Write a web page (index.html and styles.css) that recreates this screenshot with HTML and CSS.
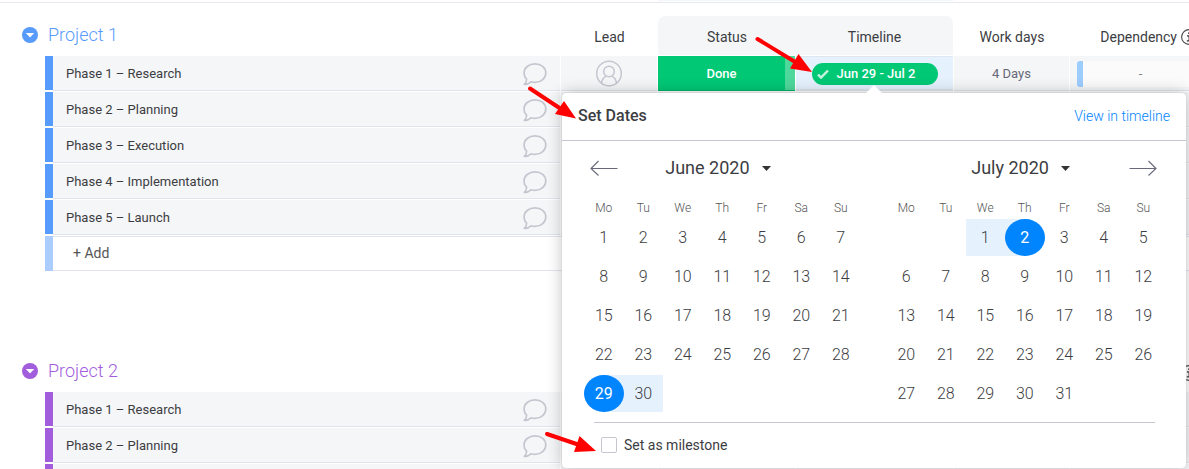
FILE: index.html
```html
<!DOCTYPE html>
<html lang="en">
<head>
<meta charset="utf-8">
<title>Project board</title>
<link rel="stylesheet" href="styles.css">
</head>
<body>
<svg class="symbols" aria-hidden="true">
  <symbol id="chat" viewBox="0 0 26 24"><path d="M14 1.800C7.800 1.800 3 5.900 3 11c0 2.400 1 4.500 2.600 6.100.2 1.800-.6 3.600-2.400 5.200 3 0 5.200-.9 6.800-2.500 1.200.4 2.600.6 4 .6 6.200 0 10.800-4.200 10.800-9.400S20.200 1.800 14 1.800z" fill="none" stroke="#c5c7d0" stroke-width="1.700" stroke-linejoin="round"/></symbol>
  <symbol id="toggle" viewBox="0 0 16 16"><circle cx="8" cy="8" r="8" fill="currentColor"/><path d="M3.800 6h8.400L8 10.600z" fill="#fff"/></symbol>
  <symbol id="info" viewBox="0 0 16 16"><circle cx="8" cy="8" r="7.400" fill="none" stroke="#444" stroke-width="1.100"/><path d="M6 6.900h2.200v5M5.800 11.900h5M7 4.200h1.600" fill="none" stroke="#333" stroke-width="1.300"/></symbol>
</svg>
<div class="topline"><span class="topline-cell"></span></div>
<main class="board">
  <table class="group blue">
    <colgroup><col class="c-gutter"><col class="c-bar"><col><col class="c-lead"><col class="c-status"><col class="c-timeline"><col class="c-days"><col class="c-dep"></colgroup>
    <thead>
      <tr>
        <th colspan="3" scope="col"><div class="group-title"><button class="toggle" aria-label="Collapse group"><svg><use href="#toggle"/></svg></button><span>Project 1</span></div></th>
        <th scope="col">Lead</th>
        <th scope="col" class="shade shade-first">Status</th>
        <th scope="col" class="shade shade-last">Timeline</th>
        <th scope="col">Work days</th>
        <th scope="col"><div class="dep-title">Dependency <svg><use href="#info"/></svg></div></th>
      </tr>
    </thead>
    <tbody>
      <tr>
        <td class="gutter"></td><td class="bar"></td>
        <td><div class="name">Phase 1 – Research<button class="chat" aria-label="Comments"><svg><use href="#chat"/></svg></button></div></td>
        <td class="center"><svg class="person" viewBox="0 0 28 28"><g fill="none" stroke="#c5c7d0" stroke-width="1.500"><circle cx="14" cy="13.500" r="12.300"/><circle cx="14" cy="11.500" r="5.300"/><path d="M6.500 23c.5-3.500 2-5.500 4.300-6.700M21.500 23c-.5-3.500-2-5.500-4.300-6.700"/></g></svg></td>
        <td class="status">Done</td>
        <td class="timeline">
          <button class="pill"><svg viewBox="0 0 12 10"><path d="M1 5.500 4 8.600 11 1.500" fill="none" stroke="#c8f3e0" stroke-width="2.400"/></svg>Jun 29 - Jul 2</button>
          <section class="popup" aria-label="Set Dates">
            <header class="popup-head"><h2>Set Dates</h2><a href="#timeline">View in timeline</a></header>
            <div class="months">
              <div>
                <div class="nav">
                  <button class="prev" aria-label="Previous month"><svg viewBox="0 0 28 16"><path d="M27.500 8.500H1.500M8.500 1 1 8.500l7.500 7" fill="none" stroke="#676879" stroke-width="1.100"/></svg></button>
                  <label class="month"><select aria-label="First month"><option>June 2020</option></select><svg viewBox="0 0 9 5"><path d="M0 0h9L4.500 5z" fill="#333"/></svg></label>
                </div>
                <table class="calendar">
                  <thead><tr><th>Mo</th><th>Tu</th><th>We</th><th>Th</th><th>Fr</th><th>Sa</th><th>Su</th></tr></thead>
                  <tbody>
                    <tr><td>1</td><td>2</td><td>3</td><td>4</td><td>5</td><td>6</td><td>7</td></tr>
                    <tr><td>8</td><td>9</td><td>10</td><td>11</td><td>12</td><td>13</td><td>14</td></tr>
                    <tr><td>15</td><td>16</td><td>17</td><td>18</td><td>19</td><td>20</td><td>21</td></tr>
                    <tr><td>22</td><td>23</td><td>24</td><td>25</td><td>26</td><td>27</td><td>28</td></tr>
                    <tr><td><div class="range from"><span class="picked">29</span></div></td><td><div class="range">30</div></td><td></td><td></td><td></td><td></td><td></td></tr>
                  </tbody>
                </table>
              </div>
              <div>
                <div class="nav">
                  <label class="month"><select aria-label="Second month"><option>July 2020</option></select><svg viewBox="0 0 9 5"><path d="M0 0h9L4.500 5z" fill="#333"/></svg></label>
                  <button class="next" aria-label="Next month"><svg viewBox="0 0 28 16"><path d="M.5 8.500h26M19.500 1 27 8.500l-7.500 7" fill="none" stroke="#676879" stroke-width="1.100"/></svg></button>
                </div>
                <table class="calendar">
                  <thead><tr><th>Mo</th><th>Tu</th><th>We</th><th>Th</th><th>Fr</th><th>Sa</th><th>Su</th></tr></thead>
                  <tbody>
                    <tr><td></td><td></td><td><div class="range">1</div></td><td><div class="range to"><span class="picked">2</span></div></td><td>3</td><td>4</td><td>5</td></tr>
                    <tr><td>6</td><td>7</td><td>8</td><td>9</td><td>10</td><td>11</td><td>12</td></tr>
                    <tr><td>13</td><td>14</td><td>15</td><td>16</td><td>17</td><td>18</td><td>19</td></tr>
                    <tr><td>20</td><td>21</td><td>22</td><td>23</td><td>24</td><td>25</td><td>26</td></tr>
                    <tr><td>27</td><td>28</td><td>29</td><td>30</td><td>31</td><td></td><td></td></tr>
                  </tbody>
                </table>
              </div>
            </div>
            <footer class="milestone"><label><input type="checkbox">Set as milestone</label></footer>
          </section>
        </td>
        <td class="center days">4 Days</td>
        <td><div class="dep">-</div></td>
      </tr>
      <tr><td class="gutter"></td><td class="bar"></td><td><div class="name">Phase 2 – Planning<button class="chat" aria-label="Comments"><svg><use href="#chat"/></svg></button></div></td><td></td><td></td><td></td><td></td><td></td></tr>
      <tr><td class="gutter"></td><td class="bar"></td><td><div class="name">Phase 3 – Execution<button class="chat" aria-label="Comments"><svg><use href="#chat"/></svg></button></div></td><td></td><td></td><td></td><td></td><td></td></tr>
      <tr><td class="gutter"></td><td class="bar"></td><td><div class="name">Phase 4 – Implementation<button class="chat" aria-label="Comments"><svg><use href="#chat"/></svg></button></div></td><td></td><td></td><td></td><td></td><td></td></tr>
      <tr><td class="gutter"></td><td class="bar"></td><td><div class="name">Phase 5 – Launch<button class="chat" aria-label="Comments"><svg><use href="#chat"/></svg></button></div></td><td></td><td></td><td></td><td></td><td></td></tr>
      <tr class="add-row"><td class="gutter"></td><td class="bar"></td><td colspan="6"><button class="add">+ Add</button></td></tr>
    </tbody>
  </table>
  <table class="group purple">
    <colgroup><col class="c-gutter"><col class="c-bar"><col><col class="c-lead"><col class="c-status"><col class="c-timeline"><col class="c-days"><col class="c-dep"></colgroup>
    <thead>
      <tr>
        <th colspan="3" scope="col"><div class="group-title"><button class="toggle" aria-label="Collapse group"><svg><use href="#toggle"/></svg></button><span>Project 2</span></div></th>
        <th></th><th></th><th></th><th></th>
        <th><div class="dep-title"><svg><use href="#info"/></svg></div></th>
      </tr>
    </thead>
    <tbody>
      <tr><td class="gutter"></td><td class="bar"></td><td><div class="name">Phase 1 – Research<button class="chat" aria-label="Comments"><svg><use href="#chat"/></svg></button></div></td><td></td><td></td><td></td><td></td><td></td></tr>
      <tr><td class="gutter"></td><td class="bar"></td><td><div class="name">Phase 2 – Planning<button class="chat" aria-label="Comments"><svg><use href="#chat"/></svg></button></div></td><td></td><td></td><td></td><td></td><td></td></tr>
      <tr><td class="gutter"></td><td class="bar"></td><td></td><td></td><td></td><td></td><td></td><td></td></tr>
    </tbody>
  </table>
</main>
<svg class="pointers" width="1189" height="469" viewBox="0 0 1189 469" aria-hidden="true">
  <g fill="none" stroke="#f00" stroke-width="4" stroke-linecap="round"><path d="M757.500 39 796 62.500"/><path d="M530 88.500 561 109"/><path d="M547 434 578 444.500"/></g>
  <g fill="#f00"><path d="M812 72 798.500 54 790 68.500z"/><path d="M576 118.500 564 101 555 114z"/><path d="M596 451 579.500 436 574 452z"/></g>
</svg>
</body>
</html>
```

FILE: styles.css
```css
* { box-sizing: border-box; }
body {
  margin: 0;
  height: 100vh;
  overflow: hidden;
  position: relative;
  background: #fff;
  color: #3c3d42;
  font: 13px/20px Roboto, "Liberation Sans", sans-serif;
}
button, select, input { font: inherit; color: inherit; }
button { padding: 0; border: 0; background: none; cursor: pointer; }
svg { display: block; }
.symbols { position: absolute; width: 0; height: 0; }

.topline {
  display: flex;
  justify-content: flex-end;
  height: 3px;
  padding-right: 236px;
  border-bottom: 1px solid #e6e9ef;
}
.topline-cell { width: 295px; height: 1px; background: #f5f6f8; }

.board { padding-top: 13px; }
.group {
  width: calc(100% + 20px);
  margin-bottom: 80px;
  table-layout: fixed;
  border-collapse: separate;
  border-spacing: 0;
}
.blue { --accent: #579bfc; --accent-soft: #abcdfd; }
.purple { --accent: #a25ddc; --accent-soft: #d0aeed; }
.c-gutter { width: 45px; }
.c-bar { width: 8px; }
.c-lead { width: 97px; }
.c-status { width: 138px; }
.c-timeline { width: 158px; }
.c-days { width: 116px; }
.c-dep { width: 139px; }

.group > thead th {
  height: 40px;
  padding: 2px 0 0;
  font-size: 14px;
  font-weight: 400;
  border-bottom: 1px solid #fff;
}
.group > thead th:first-child { padding: 0 0 1px; }
.group > thead th.shade { background: #f5f6f8; }
.group > thead th.shade-first { border-top-left-radius: 8px; }
.group > thead th.shade-last { border-top-right-radius: 8px; border-right: 1px solid #fff; }
.group-title {
  display: flex;
  align-items: center;
  gap: 10px;
  padding-left: 22px;
  color: var(--accent);
  font-size: 18px;
  font-weight: 300;
}
.toggle, .toggle svg { width: 16px; height: 16px; color: var(--accent); }
.dep-title {
  display: flex;
  align-items: center;
  justify-content: flex-end;
  gap: 4px;
  padding-right: 12px;
}
.dep-title svg { width: 16px; height: 16px; }

.group > tbody > tr > td {
  height: 36px;
  padding: 0;
  background: #f5f6f8;
  border-right: 1px solid #fff;
  border-bottom: 1px solid #fff;
  box-shadow: inset 0 -1px #e1e4ee;
}
.group > tbody > tr > td.gutter { background: none; border: 0; box-shadow: none; }
.group > tbody > tr > td.bar {
  background: var(--accent);
  border-right: 0;
  border-bottom: 2px solid #fff;
  box-shadow: none;
}
.name {
  display: flex;
  align-items: center;
  justify-content: space-between;
  padding: 0 13px;
}
.chat svg { width: 26px; height: 24px; }
.center { text-align: center; }
.person { width: 28px; height: 28px; margin: 0 auto; }
.days { color: #676879; }
.group > tbody > tr > td.status {
  text-align: center;
  padding-right: 10px;
  color: #fff;
  font-weight: 500;
  background: linear-gradient(to left, #4fd89c 10px, #00c875 10px);
  box-shadow: inset 0 -1px #00b368;
}
.group > tbody > tr > td.timeline {
  position: relative;
  background: #e5f2fe;
  box-shadow: inset 0 1px #dfe6f0, inset 0 -2px #dfe4ee;
}
.pill {
  display: flex;
  align-items: center;
  gap: 8px;
  width: 126px;
  height: 22px;
  margin: 0 auto;
  padding-left: 5px;
  border-radius: 11px;
  background: #00c875;
  color: #fff;
  font-weight: 500;
}
.pill svg { width: 12px; height: 10px; }
.dep {
  height: 26px;
  margin-left: 7px;
  padding-right: 10px;
  border-left: 6px solid #9dccff;
  border-radius: 3px 0 0 3px;
  background: #fbfbfb;
  color: #808080;
  line-height: 26px;
  text-align: center;
}
.group > tbody > tr.add-row > td { background: #fff; box-shadow: inset 0 1px #e1e4ee, inset 0 -1px #e1e4ee; }
.group > tbody > tr.add-row > td.gutter { box-shadow: none; }
.group > tbody > tr.add-row > td.bar { background: var(--accent-soft); border-bottom-width: 1px; box-shadow: none; }
.add { padding-left: 20px; font-size: 14px; color: #555; }

.popup {
  position: absolute;
  z-index: 2;
  top: 37px;
  left: -234px;
  width: 624px;
  background: #fff;
  border-radius: 4px;
  box-shadow: 0 0 16px rgba(0, 0, 0, .24), 0 0 1px #c5c7d0;
}
.popup::before {
  content: "";
  position: absolute;
  top: -8px;
  left: 304px;
  border: 8px solid transparent;
  border-top: 0;
  border-bottom-color: #fff;
}
.popup-head {
  display: flex;
  align-items: center;
  justify-content: space-between;
  height: 48px;
  padding: 0 16px 2px;
  border-bottom: 1px solid #c5c7d0;
}
.popup-head h2 { margin: 0; font-size: 16px; font-weight: 500; }
.popup-head a { color: #0085ff; font-size: 14px; font-weight: 300; text-decoration: none; }
.months {
  display: grid;
  grid-template-columns: 1fr 1fr;
  gap: 26px;
  padding: 0 23px 0 22px;
}
.nav {
  display: grid;
  grid-template-columns: 40px 1fr 40px;
  align-items: center;
  height: 54px;
}
.nav button { display: grid; place-items: center; grid-row: 1; }
.prev { grid-column: 1; }
.next { grid-column: 3; }
.nav button svg { width: 28px; height: 16px; }
.month {
  grid-column: 2;
  grid-row: 1;
  display: flex;
  align-items: center;
  justify-content: center;
  gap: 12px;
  padding-right: 8px;
}
.month select {
  appearance: none;
  padding: 0;
  border: 0;
  background: none;
  font-size: 18px;
}
.month svg { width: 9px; height: 5px; }
.calendar {
  width: 100%;
  table-layout: fixed;
  border-collapse: collapse;
  text-align: center;
  font-weight: 300;
}
.calendar th { height: 24px; padding: 1px 0 0; color: #555; font-size: 12px; font-weight: 300; }
.calendar td { height: 39px; padding: 0 0 2px; font-size: 16px; }
.range { height: 37px; line-height: 37px; background: #e5f2fe; }
.from { border-radius: 50% 0 0 50%; }
.to { border-radius: 0 50% 50% 0; }
.picked { display: block; border-radius: 50%; background: #0085ff; color: #fff; font-weight: 400; }
.milestone {
  margin: 8px 31px 0 32px;
  padding: 12px 7px 13px;
  border-top: 1px solid #c5c7d0;
  font-size: 14px;
}
.milestone label { display: flex; align-items: center; gap: 7px; }
.milestone input {
  appearance: none;
  width: 16px;
  height: 16px;
  margin: 0;
  border: 1px solid #c5c7d0;
  border-radius: 2px;
  background: #fff;
}
.pointers { position: absolute; z-index: 3; top: 0; left: 0; pointer-events: none; }
```
